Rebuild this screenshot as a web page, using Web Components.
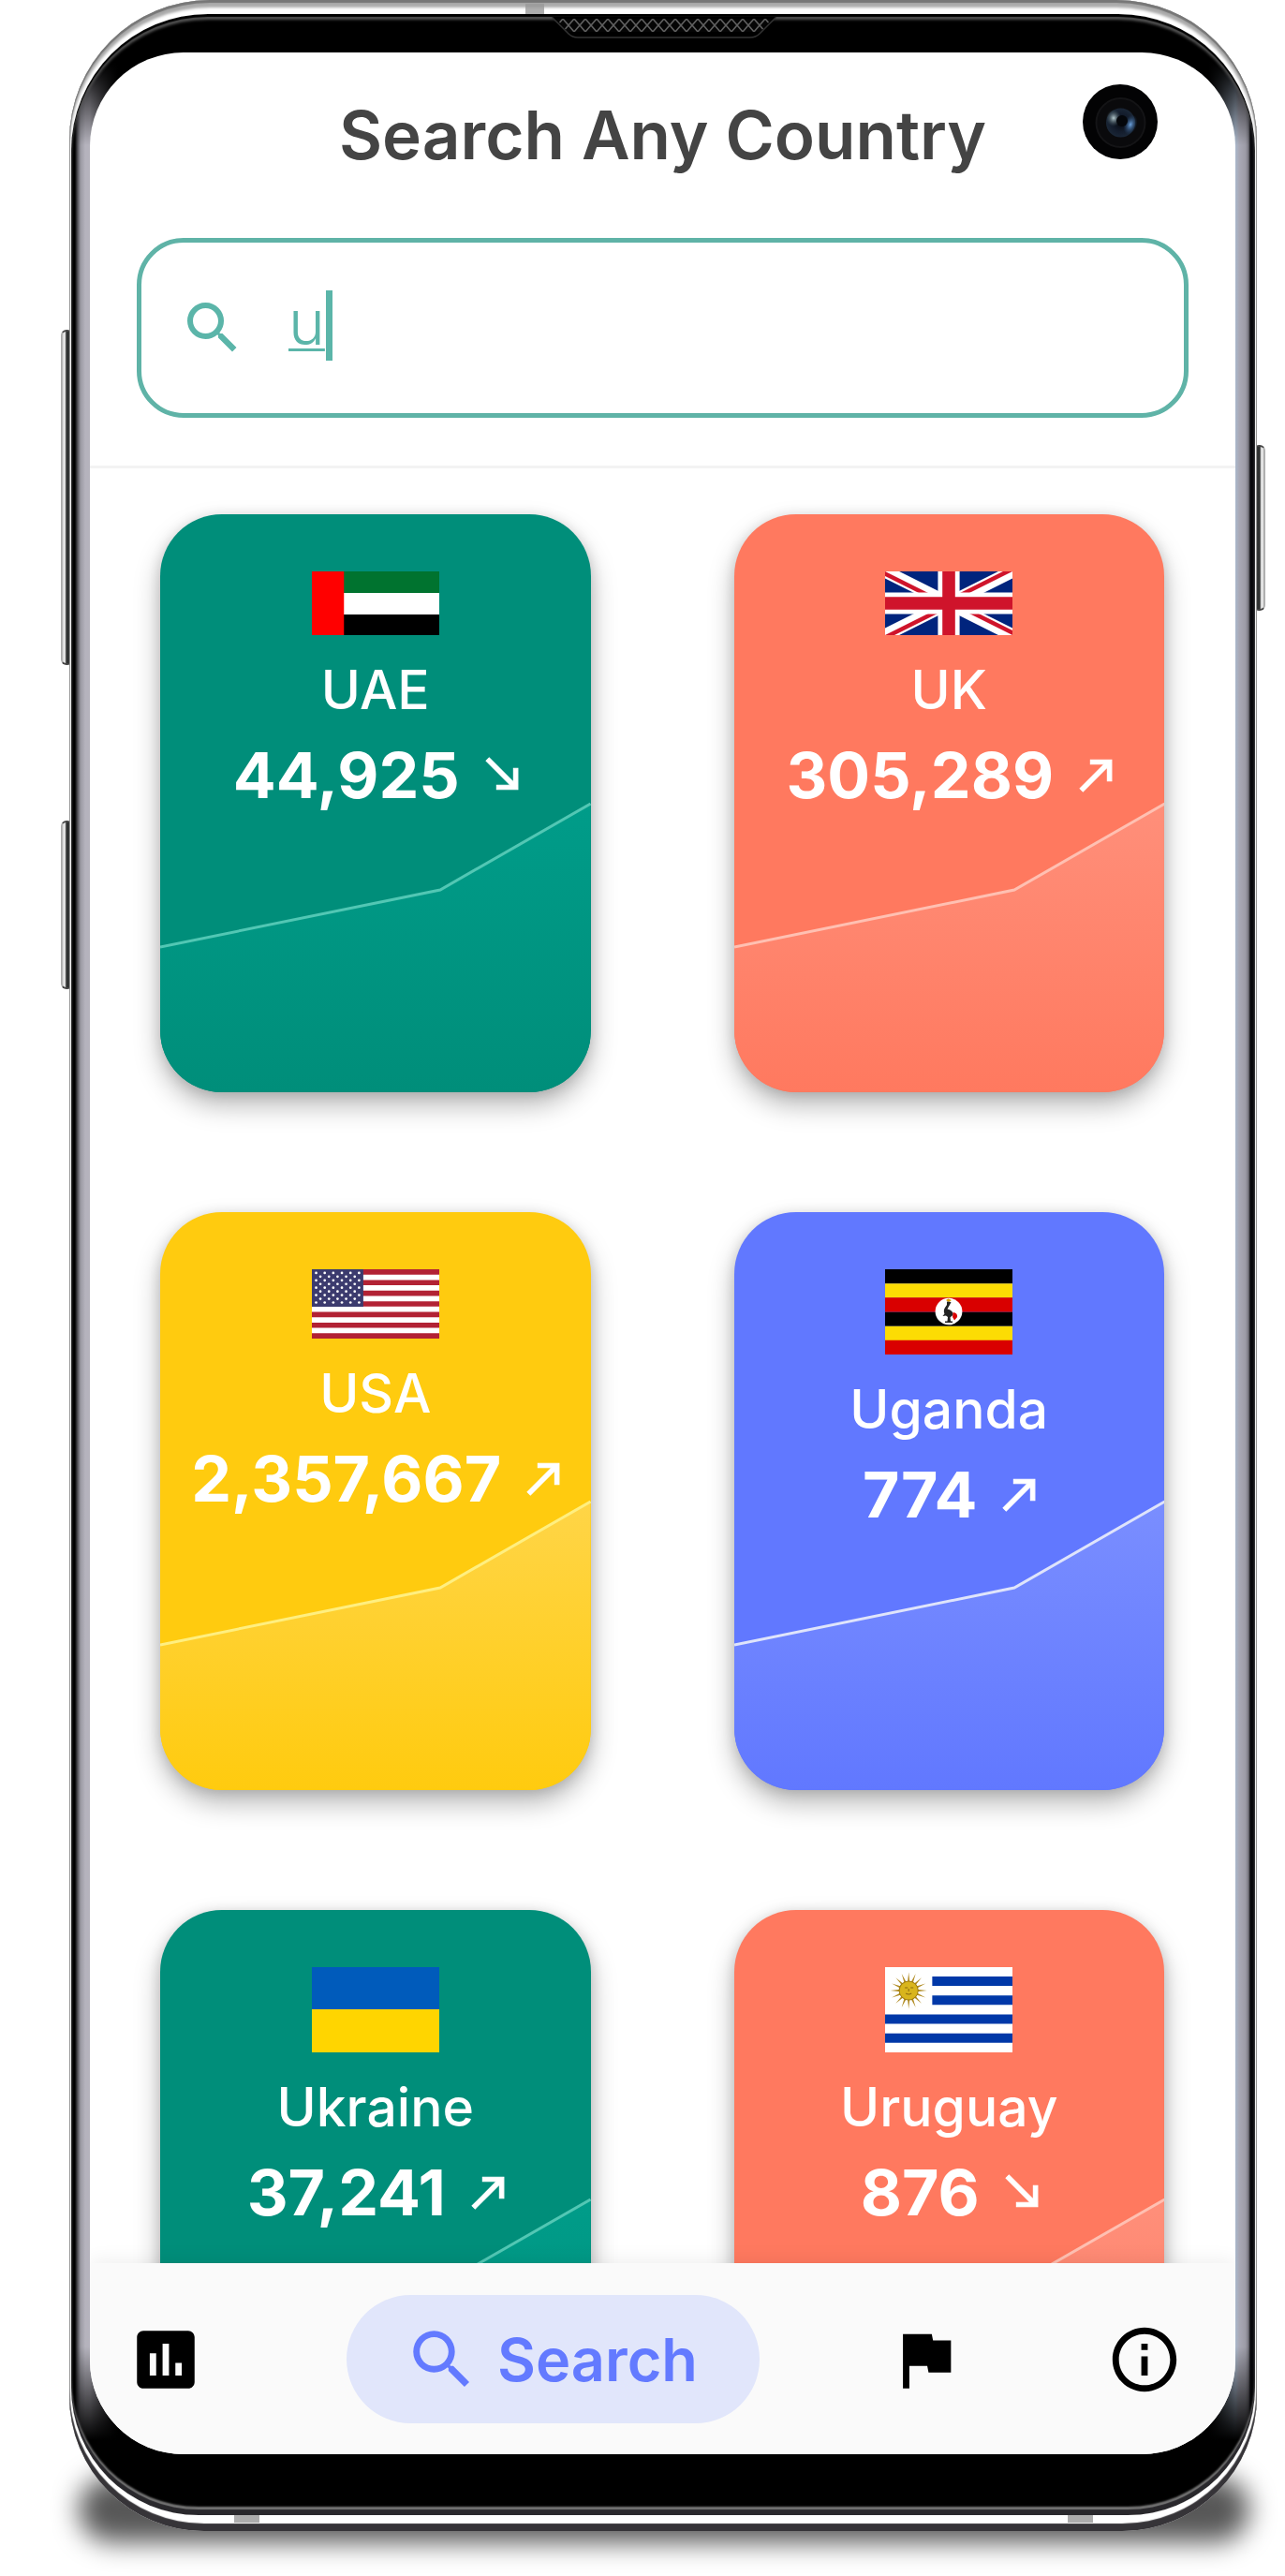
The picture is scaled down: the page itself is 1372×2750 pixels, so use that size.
<!DOCTYPE html>
<html lang="en">
<head>
<meta charset="utf-8">
<meta name="viewport" content="width=device-width, initial-scale=1">
<title>Search Any Country</title>
<style>
  html { background: #fff; }
  body {
    margin: 0;
    height: 100vh;
    box-sizing: border-box;
    padding: 0 30px 48px 74px;
    overflow: hidden;
    font-family: Inter, "Open Sans", sans-serif;
    color: #444;
  }
</style>
</head>
<body>
<phone-device>
  <country-search heading="Search Any Country" query="u"></country-search>
  <country-grid>
    <country-card name="UAE" count="44,925" trend="down" theme="green" flag="uae"></country-card>
    <country-card name="UK" count="305,289" trend="up" theme="coral" flag="uk"></country-card>
    <country-card name="USA" count="2,357,667" trend="up" theme="yellow" flag="usa"></country-card>
    <country-card name="Uganda" count="774" trend="up" theme="blue" flag="uganda"></country-card>
    <country-card name="Ukraine" count="37,241" trend="up" theme="green" flag="ukraine"></country-card>
    <country-card name="Uruguay" count="876" trend="down" theme="coral" flag="uruguay"></country-card>
  </country-grid>
  <tab-bar>
    <tab-item icon="chart" label="Statistics"></tab-item>
    <tab-item icon="search" label="Search" active></tab-item>
    <tab-item icon="flag" label="Countries"></tab-item>
    <tab-item icon="info" label="About"></tab-item>
  </tab-bar>
</phone-device>

<script>
const ICONS = {
  search: '<path d="M15.5 14h-.79l-.28-.27A6.471 6.471 0 0 0 16 9.5 6.5 6.5 0 1 0 9.5 16c1.61 0 3.09-.59 4.23-1.57l.27.28v.79l5 4.99L20.49 19l-4.99-5zm-6 0C7.01 14 5 11.99 5 9.5S7.01 5 9.5 5 14 7.01 14 9.5 11.99 14 9.5 14z"/>',
  chart: '<path d="M19 3H5c-1.1 0-2 .9-2 2v14c0 1.1.9 2 2 2h14c1.1 0 2-.9 2-2V5c0-1.1-.9-2-2-2zM9 17H7v-7h2v7zm4 0h-2V7h2v10zm4 0h-2v-4h2v4z"/>',
  flag: '<path d="M14.4 6L14 4H5v17h2v-7h5.6l.4 2h7V6z"/>',
  info: '<path d="M11 7h2v2h-2zm0 4h2v6h-2zm1-9C6.48 2 2 6.48 2 12s4.48 10 10 10 10-4.48 10-10S17.52 2 12 2zm0 18c-4.41 0-8-3.59-8-8s3.59-8 8-8 8 3.59 8 8-3.59 8-8 8z"/>'
};
const ARROWS = {
  up: '<path d="M9 5v2h6.59L4 18.59 5.41 20 17 8.41V15h2V5z"/>',
  down: '<path d="M19 9h-2v6.59L5.41 4 4 5.41 15.59 17H9v2h10V9z"/>'
};

const range = n => Array.from({ length: n }, (_, i) => i);
const stars = range(9).map(r => range(r % 2 ? 5 : 6).map(c =>
  `<circle cx="${(r % 2 ? 9 : 4.5) + c * 9.1}" cy="${3.9 + r * 3.95}" r="1.35"/>`).join('')).join('');
const rays = range(16).map(i =>
  `<path d="M23.3 19 L25 3.6 L26.7 19Z" transform="rotate(${i * 22.5} 25 23)"/>`).join('');

const FLAGS = {
  uae: [68, `<path fill="#00732f" d="M0 0h135v23H0z"/><path fill="#fff" d="M0 23h135v23H0z"/>
    <path fill="#000" d="M0 46h135v22H0z"/><path fill="#f00" d="M0 0h34v68H0z"/>`],
  uk: [68, `<defs>
      <clipPath id="all"><path d="M0 0h135v68H0z"/></clipPath>
      <clipPath id="quads"><path d="M67.5 34h67.5v34zM67.5 34v34H0zM67.5 34H0V0zM67.5 34V0h67.5z"/></clipPath>
    </defs>
    <g clip-path="url(#all)"><path fill="#00247d" d="M0 0h135v68H0z"/>
    <path stroke="#fff" stroke-width="13.5" d="M0 0l135 68M135 0L0 68"/>
    <path stroke="#cf142b" stroke-width="9" clip-path="url(#quads)" d="M0 0l135 68M135 0L0 68"/>
    <path stroke="#fff" stroke-width="23" d="M67.5 0v68M0 34h135"/>
    <path stroke="#cf142b" stroke-width="13.5" d="M67.5 0v68M0 34h135"/></g>`],
  usa: [74, `<path fill="#fff" d="M0 0h135v74H0z"/>
    <path stroke="#b22234" stroke-width="5.7" d="${range(7).map(i => `M0 ${(2.85 + i * 11.38).toFixed(2)}h135`).join('')}"/>
    <path fill="#3c3b6e" d="M0 0h54.5v40H0z"/><g fill="#fff">${stars}</g>`],
  uganda: [91, `<path fill="#000" d="M0 0h135v15.2H0zM0 45.5h135v15.2H0z"/>
    <path fill="#fcdc04" d="M0 15.2h135v15.2H0zM0 60.7h135v15.2H0z"/>
    <path fill="#d90000" d="M0 30.3h135v15.2H0zM0 75.8h135V91H0z"/>
    <circle cx="67.5" cy="45" r="14.3" fill="#fff"/>
    <path d="M64.5 33l2.500-1.500 3.500 1.500-3 2z" fill="#d9a000"/>
    <path d="M65.500 34.500l4.500.5-1.500 3-2.500 4.500q4 .5 5.500 3.500 1.500 3-1.500 4.500l-1 1 .5 4h2v1.500h-8v-1.500h2.500l.5-4.500-2-1.500-3.500.5 2-2.500q-1.500-3.500.5-6.500l2-3z" fill="#222"/>
    <path d="M72 46q5 .5 4.500 5l-3 3.500-2-3.500z" fill="#d90000"/>`],
  ukraine: [91, `<path fill="#005bbb" d="M0 0h135v45H0z"/><path fill="#ffd500" d="M0 45h135v46H0z"/>`],
  uruguay: [91, `<path fill="#fff" d="M0 0h135v91H0z"/>
    <path fill="#0038a8" d="M50 10h85v10H50zM50 30.300h85v10H50zM0 50.500h135v10H0zM0 70.700h135v10H0z"/>
    <g fill="#b08a20" transform="translate(0 2)">${rays}</g><circle cx="25" cy="25" r="10" fill="#d9b51c" stroke="#a07d10" stroke-width="1"/>
    <path d="M21 22h3M27 22h3M22 28q3 2 6 0M25 23v3" stroke="#8a6a10" stroke-width="1" fill="none"/>`]
};

const THEMES = {
  green:  { base: '#008e7a', glow: '#009c89', line: '#52c7b4' },
  coral:  { base: '#ff795f', glow: '#ff8f7a', line: '#ffc0b2' },
  yellow: { base: '#ffcb0f', glow: '#ffd547', line: '#ffef80' },
  blue:   { base: '#6178ff', glow: '#7a8eff', line: '#dfe4fb' }
};

const view = (el, html) => { el.attachShadow({ mode: 'open' }).innerHTML = html; };

customElements.define('phone-device', class extends HTMLElement {
  connectedCallback() {
    view(this, `<style>
      :host { display: block; position: relative; z-index: 0; height: 100%; }
      .shadow { position: absolute; z-index: -1; left: 10px; right: 8px; bottom: -12px; height: 70px; border-radius: 40px; background: rgba(0,0,0,.66); filter: blur(14px); }
      .key { position: absolute; z-index: -1; box-sizing: border-box; width: 13px; border-radius: 6px; background: linear-gradient(90deg, #aaa, #fff 3px, #2b2d2d 5px, #3a3c3c 9px, #fff 10px); border: 1px solid #aaa; border-block-width: 2px; border-block-color: #444; }
      .volume { left: -9px; top: 352px; height: 358px; }
      .assist { left: -9px; top: 876px; height: 180px; }
      .power { right: -9px; top: 475px; height: 177px; transform: scaleX(-1); }
      .body {
        height: 100%; box-sizing: border-box; padding: 15px 2px 17px; border-radius: 150px 150px 144px 144px;
        background: #fff;
        box-shadow: inset 0 3px 1px #777, inset 0 8px 3px #aaa, inset 0 -8px 1px #363438, inset 0 0 0 1px #999;
      }
      .bezel {
        height: 100%; box-sizing: border-box; padding: 41px 21px 65px 20px; border-radius: 146px 146px 136px 136px;
        background:
          linear-gradient(#000 50px, #0000 140px, #0000 calc(100% - 180px), #000 calc(100% - 80px)),
          linear-gradient(90deg, #000 4px, #55545a 7px, #9a99a2 10px, #b5b3bd 15px, #b5b3bd 20px, #000 50px, #000 calc(100% - 50px), #a9b8cc calc(100% - 21px), #a9a9b6 calc(100% - 17px), #9c9ba6 calc(100% - 10px), #77767f calc(100% - 7px), #08080c calc(100% - 5px));
        box-shadow: inset 0 3px 1px #000, inset 0 6px 3px #555, inset 0 -6px 1px #29282c, inset 0 -9px 2px #777;
      }
      .screen { display: flex; flex-direction: column; height: 100%; overflow: hidden; border-radius: 100px; background: #fff; }
      .mark { position: absolute; background: #999; opacity: .8; }
      .m1 { left: 487px; top: 4px; width: 20px; height: 11px; }
      .m2 { left: 176px; bottom: 9px; width: 27px; height: 8px; }
      .m3 { right: 175px; bottom: 9px; width: 27px; height: 8px; }
      .speaker { position: absolute; top: 18px; left: calc(50% - 119px); }
      .camera { position: absolute; top: 90px; right: 106px; }
    </style>
    <div class="shadow"></div>
    <div class="key volume"></div><div class="key assist"></div><div class="key power"></div>
    <div class="body"><div class="bezel"><div class="screen"><slot></slot></div></div></div>
    <div class="mark m1"></div><div class="mark m2"></div><div class="mark m3"></div>
    <svg class="speaker" width="240" height="23" viewBox="0 0 240 23" aria-hidden="true">
      <defs><pattern id="mesh" width="12" height="14" y="2" patternUnits="userSpaceOnUse">
        <rect width="12" height="14" fill="#050505"/><path d="M0 0l6 7 6-7M0 14l6-7 6 7" fill="none" stroke="#606060" stroke-width="1.500"/></pattern></defs>
      <path d="M0 0h240l-18 19q-3 3-8 3H28q-6 0-9-3z" fill="#000"/>
      <path d="M5 2h230l-12 14H17z" fill="url(#mesh)"/>
      <path d="M0 0l18 18q4 4 10 4h184q6 0 10-4L240 0" fill="none" stroke="#333" stroke-width="1.500"/>
    </svg>
    <svg class="camera" width="80" height="80" viewBox="0 0 80 80" aria-hidden="true">
      <defs>
        <radialGradient id="lens"><stop offset="0" stop-color="#05070c"/><stop offset=".6" stop-color="#131c2c"/><stop offset="1" stop-color="#1a2636"/></radialGradient>
        <radialGradient id="glint"><stop offset="0" stop-color="#b8ccd0"/><stop offset="1" stop-color="#40565c" stop-opacity="0"/></radialGradient>
        <radialGradient id="blue"><stop offset="0" stop-color="#6ea4e0"/><stop offset="1" stop-color="#22446e" stop-opacity="0"/></radialGradient>
      </defs>
      <circle cx="40" cy="40" r="40" fill="#030304"/><circle cx="40.500" cy="41" r="26" fill="#0a0a0c" stroke="#141416" stroke-width="2"/>
      <circle cx="40.500" cy="41" r="15.500" fill="url(#lens)"/>
      <ellipse cx="33" cy="36" rx="8" ry="9" fill="url(#glint)"/>
      <ellipse cx="51" cy="43" rx="7" ry="11" fill="url(#blue)" transform="rotate(20 51 43)"/>
      <circle cx="42" cy="39" r="6" fill="#04060a"/>
    </svg>`);
  }
});

customElements.define('ui-icon', class extends HTMLElement {
  connectedCallback() {
    view(this, `<style>:host { display: block; flex: none; width: var(--size, 82px); height: var(--size, 82px); } svg { display: block; width: 100%; height: 100%; fill: currentColor; }</style>
      <svg viewBox="0 0 24 24" aria-hidden="true">${ICONS[this.getAttribute('name')]}</svg>`);
  }
});

customElements.define('country-search', class extends HTMLElement {
  connectedCallback() {
    view(this, `<style>
      :host { display: block; flex: none; padding: 46px 50px 51px; border-bottom: 3px solid #f3f3f3; }
      h1 { margin: 0 0 68px; font-size: 71px; line-height: 84px; font-weight: 600; text-align: center; color: #444; }
      label { display: flex; align-items: center; height: 192px; box-sizing: border-box; padding: 0 40px; border: 5px solid #5fb3a7; border-radius: 50px; color: #5bb5a9; cursor: text; }
      ui-icon { --size: 72px; margin-right: 45px; }
      input { field-sizing: content; box-sizing: border-box; min-width: 40px; max-width: 900px; margin: 0 0 12px; padding: 0; border: 0; outline: 0; background: none; color: inherit; font: 300 66px/76px Inter, sans-serif; text-decoration: underline 3px; text-underline-offset: 4px; caret-color: transparent; }
      i { width: 7px; height: 75px; margin-bottom: 6px; background: #5bb5a9; }
    </style>
    <h1>${this.getAttribute('heading')}</h1>
    <label><ui-icon name="search"></ui-icon><input type="text" aria-label="Search country" value="${this.getAttribute('query')}"><i></i></label>`);
  }
});

customElements.define('country-grid', class extends HTMLElement {
  connectedCallback() {
    view(this, `<style>
      :host { display: grid; flex: 1 1 0; min-height: 0; grid-template-columns: 1fr 1fr; grid-auto-rows: max-content; gap: 128px 153px; padding: 49px 76px 49px 75px; overflow: hidden auto; scrollbar-width: none; }
    </style><slot></slot>`);
  }
});

customElements.define('country-card', class extends HTMLElement {
  connectedCallback() {
    const a = n => this.getAttribute(n);
    const t = THEMES[a('theme')];
    const [h, art] = FLAGS[a('flag')];
    view(this, `<style>
      :host { display: block; position: relative; min-height: 617px; box-sizing: border-box; padding-top: 61px; border-radius: 66px; background: ${t.base}; color: #fff; box-shadow: 0 14px 28px rgba(0,0,0,.28), 0 2px 14px rgba(0,0,0,.13); }
      .trend { position: absolute; inset: 0; width: 100%; height: 100%; border-radius: inherit; }
      .info { position: relative; display: flex; flex-direction: column; align-items: center; }
      h2 { margin: 26px 0 17px; font-size: 57px; line-height: 66px; font-weight: 500; }
      p { display: flex; align-items: center; gap: 28px; margin: 0; font-size: 68px; line-height: 80px; font-weight: 700; }
      .arrow { fill: #fff; stroke: #fff; stroke-width: .5; overflow: visible; }
    </style>
    <svg class="trend" viewBox="0 0 458 617" preserveAspectRatio="none" aria-hidden="true">
      <defs><linearGradient id="g" x1="0" y1="0" x2="0" y2="1"><stop offset="0" stop-color="${t.glow}"/><stop offset="1" stop-color="${t.base}"/></linearGradient></defs>
      <path d="M0 462L298 401L458 309V617H0z" fill="url(#g)"/>
      <path d="M0 462L298 401L458 309" fill="none" stroke="${t.line}" stroke-width="3"/>
    </svg>
    <div class="info">
      <svg width="136" height="${h}" viewBox="0 0 135 ${h}" preserveAspectRatio="none" role="img" aria-label="${a('name')} flag">${art}</svg>
      <h2>${a('name')}</h2>
      <p><span>${a('count')}</span><svg class="arrow" width="34" height="36" viewBox="4 4 15 16" aria-hidden="true">${ARROWS[a('trend')]}</svg></p>
    </div>`);
  }
});

customElements.define('tab-bar', class extends HTMLElement {
  connectedCallback() {
    view(this, `<style>
      :host { display: block; flex: none; position: relative; }
      nav { display: flex; align-items: center; justify-content: space-between; padding: 34px 56px 33px 40px; background: #fafafa; box-shadow: 0 -2px 20px rgba(0,0,0,.07); }
    </style><nav aria-label="Main"><slot></slot></nav>`);
  }
});

customElements.define('tab-item', class extends HTMLElement {
  connectedCallback() {
    const label = this.getAttribute('label'), active = this.hasAttribute('active');
    view(this, `<style>
      :host { display: block; }
      :host([active]) { margin-right: -16px; }
      button { display: flex; align-items: center; gap: 18px; min-height: 137px; margin: 0; padding: 0; border: 0; background: none; color: #000; font: 600 63px/74px Inter, sans-serif; cursor: pointer; }
      .on { padding: 0 66px 0 61px; border-radius: 69px; background: #e1e6fb; color: #637aff; }
    </style>
    <button type="button" class="${active ? 'on' : ''}" ${active ? 'aria-current="page"' : `aria-label="${label}"`}><ui-icon name="${this.getAttribute('icon')}"></ui-icon>${active ? `<span>${label}</span>` : ''}</button>`);
  }
});
</script>
</body>
</html>
